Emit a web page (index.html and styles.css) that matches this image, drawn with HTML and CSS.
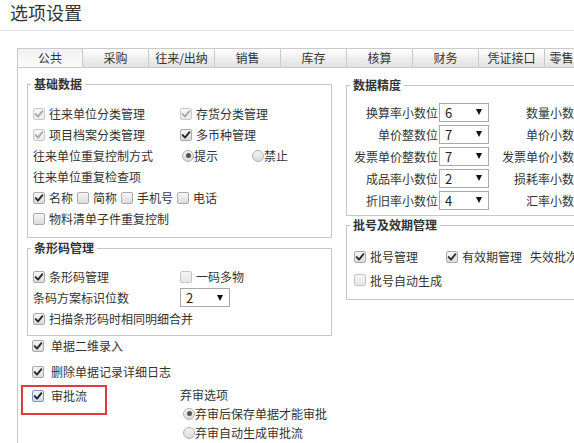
FILE: index.html
```html
<!DOCTYPE html>
<html lang="zh-CN">
<head>
<meta charset="utf-8">
<title>选项设置</title>
<link rel="stylesheet" href="styles.css">
</head>
<body>
<header class="page-title">选项设置</header>
<div class="tabs-wrap">
  <nav class="tabs">
    <div class="tab active">公共</div>
    <div class="tab">采购</div>
    <div class="tab">往来/出纳</div>
    <div class="tab">销售</div>
    <div class="tab">库存</div>
    <div class="tab">核算</div>
    <div class="tab">财务</div>
    <div class="tab">凭证接口</div>
    <div class="tab last">零售</div>
  </nav>
  <div class="panel">
    <div class="col-left">
      <section class="group g-basic">
        <h3 class="group-title">基础数据</h3>
        <div class="row two">
          <label class="item"><span class="cb on dis"><svg viewBox="0 0 10 10"><path d="M1.7 5.1 L4 7.6 L8.4 2.2"/></svg></span>往来单位分类管理</label>
          <label class="item"><span class="cb on dis"><svg viewBox="0 0 10 10"><path d="M1.7 5.1 L4 7.6 L8.4 2.2"/></svg></span>存货分类管理</label>
        </div>
        <div class="row two">
          <label class="item"><span class="cb on dis"><svg viewBox="0 0 10 10"><path d="M1.7 5.1 L4 7.6 L8.4 2.2"/></svg></span>项目档案分类管理</label>
          <label class="item"><span class="cb on"><svg viewBox="0 0 10 10"><path d="M1.7 5.1 L4 7.6 L8.4 2.2"/></svg></span>多币种管理</label>
        </div>
        <div class="row two">
          <span>往来单位重复控制方式</span>
          <div class="radios">
            <label class="ritem"><span class="rd on"></span>提示</label>
            <label class="ritem"><span class="rd"></span>禁止</label>
          </div>
        </div>
        <div class="row">往来单位重复检查项</div>
        <div class="row checks">
          <label class="item"><span class="cb on"><svg viewBox="0 0 10 10"><path d="M1.7 5.1 L4 7.6 L8.4 2.2"/></svg></span>名称</label>
          <label class="item"><span class="cb"></span>简称</label>
          <label class="item"><span class="cb"></span>手机号</label>
          <label class="item"><span class="cb"></span>电话</label>
        </div>
        <div class="row">
          <label class="item"><span class="cb"></span>物料清单子件重复控制</label>
        </div>
      </section>

      <section class="group g-barcode">
        <h3 class="group-title">条形码管理</h3>
        <div class="row two">
          <label class="item"><span class="cb on"><svg viewBox="0 0 10 10"><path d="M1.7 5.1 L4 7.6 L8.4 2.2"/></svg></span>条形码管理</label>
          <label class="item"><span class="cb light"></span>一码多物</label>
        </div>
        <div class="row two">
          <span>条码方案标识位数</span>
          <div class="select"><span>2</span><i class="arrow"></i></div>
        </div>
        <div class="row">
          <label class="item"><span class="cb on"><svg viewBox="0 0 10 10"><path d="M1.7 5.1 L4 7.6 L8.4 2.2"/></svg></span>扫描条形码时相同明细合并</label>
        </div>
      </section>

      <div class="plain">
        <div class="simple r1">
          <label class="item wide"><span class="cb on"><svg viewBox="0 0 10 10"><path d="M1.7 5.1 L4 7.6 L8.4 2.2"/></svg></span>单据二维录入</label>
        </div>
        <div class="simple r2">
          <label class="item wide"><span class="cb on"><svg viewBox="0 0 10 10"><path d="M1.7 5.1 L4 7.6 L8.4 2.2"/></svg></span>删除单据记录详细日志</label>
        </div>
        <div class="approval-row">
          <div class="red-box">
            <label class="item wide"><span class="cb on focus"><svg viewBox="0 0 10 10"><path d="M1.7 5.1 L4 7.6 L8.4 2.2"/></svg></span>审批流</label>
          </div>
          <div class="abandon">
            <div class="opt-title">弃审选项</div>
            <label class="ritem opt"><span class="rd on"></span>弃审后保存单据才能审批</label>
            <label class="ritem opt"><span class="rd"></span>弃审自动生成审批流</label>
          </div>
        </div>
      </div>
    </div>

    <div class="col-right">
      <section class="group g-precision">
        <h3 class="group-title">数据精度</h3>
        <div class="prec-row">
          <span class="lab">换算率小数位</span><div class="select sm"><span>6</span><i class="arrow"></i></div>
          <span class="lab r">数量小数位</span><div class="select sm"><span>2</span><i class="arrow"></i></div>
        </div>
        <div class="prec-row">
          <span class="lab">单价整数位</span><div class="select sm"><span>7</span><i class="arrow"></i></div>
          <span class="lab r">单价小数位</span><div class="select sm"><span>2</span><i class="arrow"></i></div>
        </div>
        <div class="prec-row">
          <span class="lab">发票单价整数位</span><div class="select sm"><span>7</span><i class="arrow"></i></div>
          <span class="lab r">发票单价小数位</span><div class="select sm"><span>2</span><i class="arrow"></i></div>
        </div>
        <div class="prec-row">
          <span class="lab">成品率小数位</span><div class="select sm"><span>2</span><i class="arrow"></i></div>
          <span class="lab r">损耗率小数位</span><div class="select sm"><span>2</span><i class="arrow"></i></div>
        </div>
        <div class="prec-row">
          <span class="lab">折旧率小数位</span><div class="select sm"><span>4</span><i class="arrow"></i></div>
          <span class="lab r">汇率小数位</span><div class="select sm"><span>4</span><i class="arrow"></i></div>
        </div>
      </section>

      <section class="group g-batch">
        <h3 class="group-title">批号及效期管理</h3>
        <div class="batch-row b1">
          <label class="item bcol"><span class="cb on"><svg viewBox="0 0 10 10"><path d="M1.7 5.1 L4 7.6 L8.4 2.2"/></svg></span>批号管理</label>
          <label class="item"><span class="cb on"><svg viewBox="0 0 10 10"><path d="M1.7 5.1 L4 7.6 L8.4 2.2"/></svg></span>有效期管理</label>
          <span class="expire">失效批次控制</span>
        </div>
        <div class="batch-row b2">
          <label class="item"><span class="cb light"></span>批号自动生成</label>
        </div>
      </section>
    </div>
  </div>
</div>
</body>
</html>
```
FILE: styles.css
```css
* { box-sizing: border-box; }
html, body { margin: 0; padding: 0; overflow: hidden; }
body {
  width: 574px;
  height: 443px;
  background: #fff;
  font-family: "Noto Sans CJK SC", "Microsoft YaHei", sans-serif;
  font-size: 12px;
  color: #333;
}
.page-title {
  height: 31px;
  border-bottom: 1px solid #e6e6e6;
  padding-left: 10px;
  font-size: 18px;
  line-height: 25px;
  color: #333;
  white-space: nowrap;
}
.tabs-wrap {
  margin: 17px 0 0 17px;
  width: 760px;
}
.tabs { display: flex; height: 19px; }
.tab {
  flex-shrink: 0;
  width: 66px;
  height: 19px;
  border: 1px solid #c9c9c9;
  border-left: none;
  border-bottom: none;
  background: linear-gradient(#fefefe, #e1e1e1);
  text-align: center;
  line-height: 17px;
  color: #333;
  white-space: nowrap;
}
.tab:first-child { border-left: 1px solid #c9c9c9; }
.tab.active { background: linear-gradient(#f1f1f1, #fbfbfb); }
.tab.last { width: 34px; }

.panel {
  display: flex;
  border-top: 1px solid #c9c9c9;
  border-left: 1px solid #c9c9c9;
  height: 380px;
}
.col-left { width: 314px; flex-shrink: 0; }
.col-right { width: 420px; margin-left: 14px; flex-shrink: 0; }

.group { position: relative; border: 1px solid #c6c6c6; }
.group-title {
  position: absolute;
  left: 3px;
  top: -9px;
  margin: 0;
  padding: 0 3px;
  background: #fff;
  font-size: 12px;
  font-weight: bold;
  line-height: 16px;
  color: #333;
  white-space: nowrap;
}
.g-basic { margin: 16px 0 0 9px; width: 305px; padding: 18px 0 8px 5px; }
.g-barcode { margin: 10px 0 0 9px; width: 305px; padding: 17px 0 6px 5px; }

.row { display: flex; align-items: center; height: 21px; white-space: nowrap; }
.row.two { display: grid; grid-template-columns: 147px auto; align-items: center; }
.row.checks { gap: 4px; }

.item { display: inline-flex; align-items: center; white-space: nowrap; }
.cb {
  display: inline-flex;
  align-items: center;
  justify-content: center;
  width: 12px;
  height: 12px;
  margin-right: 4px;
  border: 1px solid #a9a9a9;
  border-radius: 2px;
  background: linear-gradient(#f6f6f6, #dcdcdc);
  color: #2b2b2b;
  flex-shrink: 0;
}
.cb svg { width: 10px; height: 10px; display: block; }
.cb svg path { fill: none; stroke: currentColor; stroke-width: 1.9; stroke-linecap: round; stroke-linejoin: round; }
.cb.dis { border-color: #c9c9c9; background: linear-gradient(#f7f7f7, #ebebeb); color: #a9a9a9; }
.cb.light { border-color: #c4c4c4; background: linear-gradient(#f4f4f4, #e6e6e6); }
.cb.focus { border-color: #7d96c2; background: linear-gradient(#eef3fb, #cfdcf0); color: #222; }
.item.wide .cb { margin-right: 7px; }

.radios { display: flex; }
.ritem { display: inline-flex; align-items: center; white-space: nowrap; }
.radios .ritem { width: 70px; }
.radios .ritem:first-child { margin-left: 2px; }
.rd {
  position: relative;
  width: 12px;
  height: 12px;
  border-radius: 50%;
  border: 1px solid #b3b3b3;
  background: linear-gradient(#f3f3f3, #d9d9d9);
  flex-shrink: 0;
}
.rd.on::after {
  content: "";
  position: absolute;
  left: 2.5px;
  top: 2.5px;
  width: 5px;
  height: 5px;
  border-radius: 50%;
  background: #555;
}

.select {
  display: flex;
  align-items: center;
  justify-content: space-between;
  width: 50px;
  height: 19px;
  border: 1px solid #a9a9a9;
  background: #fff;
  padding: 0 6px 0 5px;
  color: #222;
  font-size: 13px;
  flex-shrink: 0;
}
.arrow {
  width: 0;
  height: 0;
  border-left: 3.5px solid transparent;
  border-right: 3.5px solid transparent;
  border-top: 6px solid #111;
}

.plain { padding-left: 3px; }
.simple { display: flex; align-items: center; height: 19px; padding-left: 11px; }
.simple.r2 { margin-top: 7px; }
.approval-row { display: flex; align-items: flex-start; margin-top: 4px; }
.red-box {
  width: 86px;
  height: 30px;
  border: 2px solid #e23b3b;
  padding: 2px 0 0 9px;
  line-height: 14px;
  flex-shrink: 0;
}
.red-box .item { height: 14px; }
.abandon { margin: 1px 0 0 73px; white-space: nowrap; }
.opt-title { line-height: 18px; }
.ritem.opt { display: flex; height: 19px; padding-left: 3px; }

.g-precision { margin-top: 17px; padding: 16px 0 5px 7px; }
.prec-row { display: flex; align-items: center; height: 20px; margin-bottom: 2px; white-space: nowrap; }
.prec-row:last-child { margin-bottom: 0; }
.lab { width: 84px; text-align: right; flex-shrink: 0; }
.prec-row .select { margin-left: 1px; }
.lab.r { margin-left: 13px; }

.g-batch { margin-top: 9px; padding: 20px 0 9px 7px; }
.batch-row { display: flex; align-items: center; white-space: nowrap; }
.batch-row.b1 { height: 21px; }
.batch-row.b2 { height: 20px; margin-top: 3px; }
.bcol { width: 92px; }
.expire { margin-left: 8px; }
```
